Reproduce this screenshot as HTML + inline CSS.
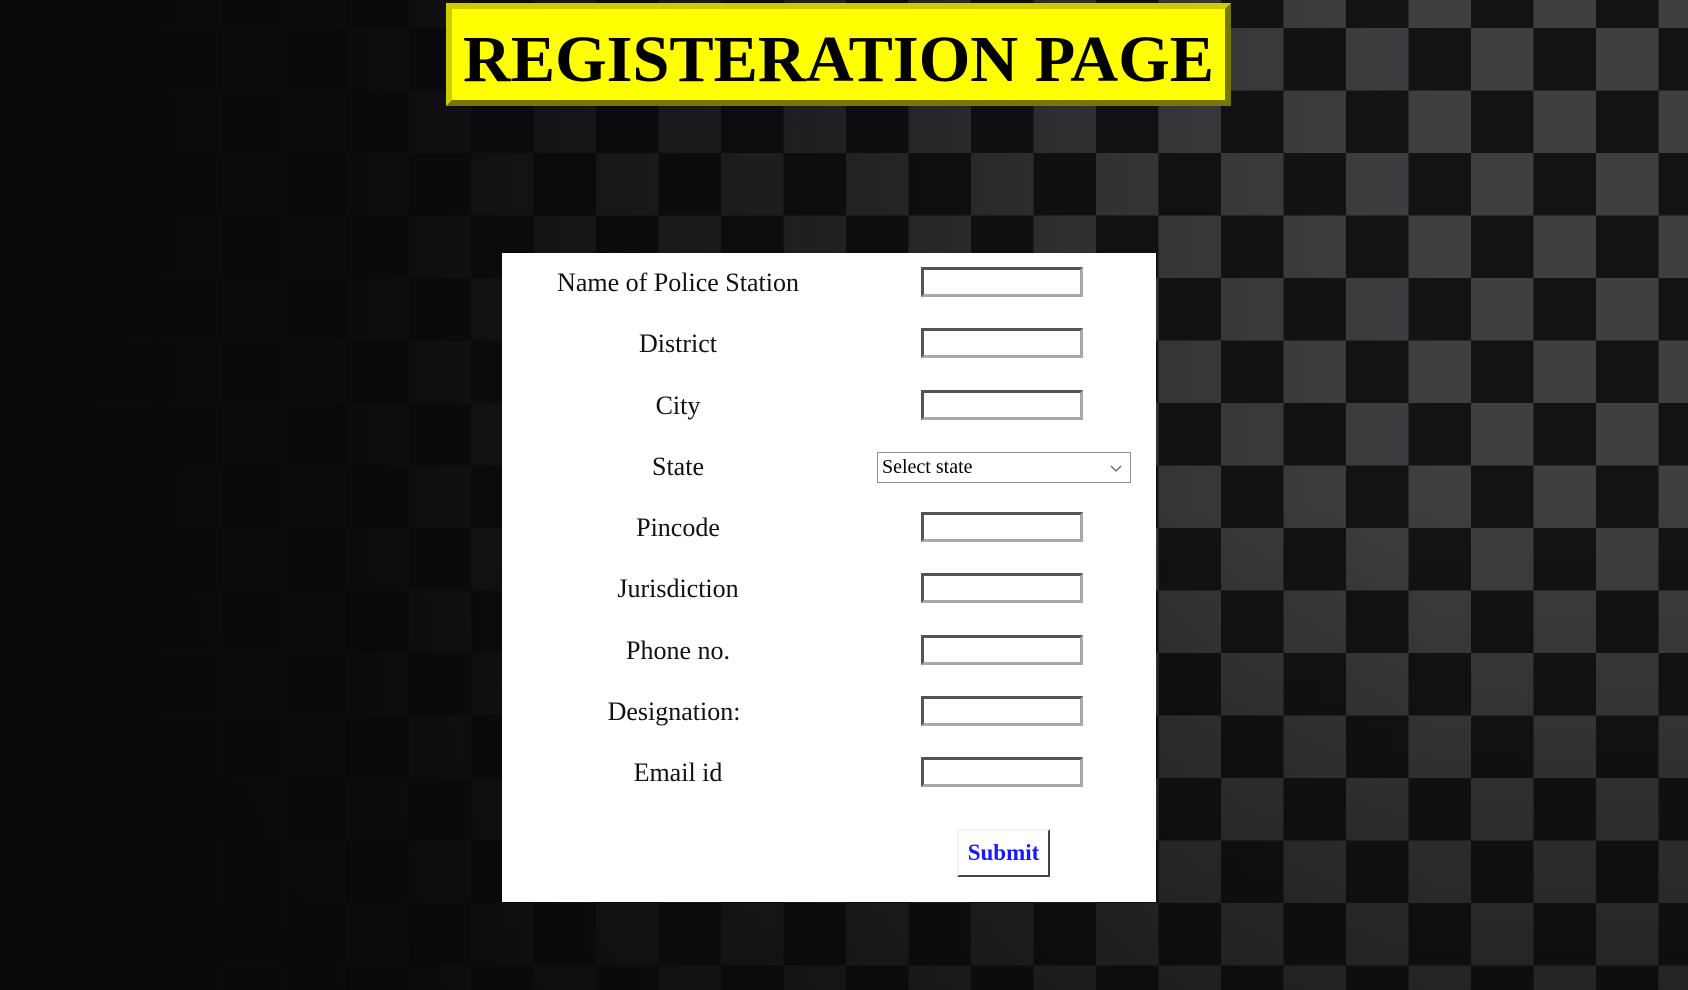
<!DOCTYPE html>
<html><head><meta charset="utf-8"><style>
html,body{margin:0;padding:0;width:1688px;height:990px;overflow:hidden}
body{position:relative;background-color:#141215;
background-image:linear-gradient(90deg,rgba(10,8,10,1) 0px,rgba(10,8,10,.95) 350px,rgba(10,8,10,.6) 800px,rgba(10,8,10,.15) 1200px,rgba(10,8,10,0) 1450px),
linear-gradient(180deg,rgba(10,8,10,0) 0px,rgba(10,8,10,0) 500px,rgba(10,8,10,.5) 990px),
conic-gradient(#141215 25%,#403e41 0 50%,#141215 0 75%,#403e41 0);
background-size:100% 100%,100% 100%,125px 125px;
background-position:0 0,0 0,96px 28px;
font-family:"Liberation Serif",serif}
.title{position:absolute;left:446px;top:3px;width:773px;height:91px;background:#ffff00;border:6px outset #cccc00}
.box{position:absolute;left:502px;top:253px;width:654px;height:649px;background:#fff}
.lbl{position:absolute;left:0;width:352px;text-align:center;font-size:26px;color:#111;line-height:30px}
.in{position:absolute;left:419px;width:156px;height:24px;border:3px inset #a8a8a8;border-right-color:#a8a8a8;border-bottom-color:#a8a8a8;box-sizing:content-box;background:#fff}
.sel{position:absolute;left:375px;top:199px;border:1px solid #8f8f8f;font-size:20px;line-height:29px;padding-left:4px;box-sizing:border-box;width:254px;height:31px}
.btn{position:absolute;left:455px;top:576px;width:93px;height:48px;box-sizing:border-box;border:2px solid;border-color:#f4f4f4 #444 #444 #f4f4f4;color:#1a1aff;font-weight:bold;font-size:23px;text-align:center;line-height:44px}
</style></head><body>
<div class="title"><svg width="773" height="91" style="display:block"><text x="11" y="72" textLength="751" lengthAdjust="spacingAndGlyphs" font-family="Liberation Serif" font-weight="bold" font-size="66" fill="#000">REGISTERATION PAGE</text></svg></div>
<div class="box">
<div class="lbl" style="top:15px">Name of Police Station</div><div class="in" style="top:14px"></div>
<div class="lbl" style="top:76px">District</div><div class="in" style="top:75px"></div>
<div class="lbl" style="top:138px">City</div><div class="in" style="top:137px"></div>
<div class="lbl" style="top:199px">State</div>
<div class="sel">Select state<svg width="12" height="8" style="position:absolute;right:8px;top:12px"><path d="M1 1L6 6L11 1" stroke="#666" fill="none" stroke-width="1.3"/></svg></div>
<div class="lbl" style="top:260px">Pincode</div><div class="in" style="top:259px"></div>
<div class="lbl" style="top:321px">Jurisdiction</div><div class="in" style="top:320px"></div>
<div class="lbl" style="top:383px">Phone no.</div><div class="in" style="top:382px"></div>
<div class="lbl" style="top:444px;left:-4px">Designation:</div><div class="in" style="top:443px"></div>
<div class="lbl" style="top:505px">Email id</div><div class="in" style="top:504px"></div>
<div class="btn">Submit</div>
</div>
</body></html>
